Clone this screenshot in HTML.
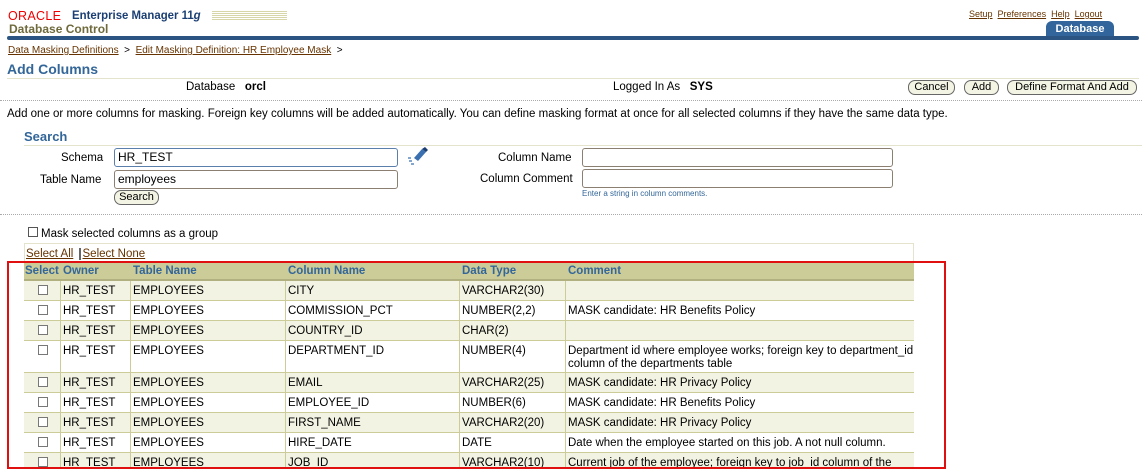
<!DOCTYPE html>
<html><head><meta charset="utf-8"><style>
*{margin:0;padding:0;box-sizing:border-box}
body{width:1142px;height:474px;overflow:hidden;background:#fff;font-family:"Liberation Sans",sans-serif;font-size:11.5px;color:#000;position:relative}
.a{position:absolute;white-space:nowrap}
.lk{color:#663300;text-decoration:underline}
.btn{position:absolute;height:15px;border:1px solid #666;border-radius:7px;background:#f4f4e4;font-size:11px;line-height:13px;text-align:center;color:#000}
.dot{position:absolute;left:0;width:1142px;border-top:1px dotted #aaa}
.inp{position:absolute;height:19px;border:1px solid #8a7f70;border-radius:3px;background:#fff;font-size:12px;line-height:17px;padding-left:3px}
.tb{position:absolute;left:24px;width:890px}
.r{position:absolute;left:0;width:890px;border-bottom:1px solid #cccc99}
.c{position:absolute;top:0;bottom:0;border-left:1px solid #cccc99;padding:4px 2px;font-size:11.5px;line-height:13px;white-space:nowrap}
.cb{position:absolute;left:14px;top:4px;width:10px;height:10px;border:1px solid #777;background:#fff}
</style></head><body>
<div class="a" style="left:8px;top:9px;font-size:12.5px;color:#e00;letter-spacing:0.3px">ORACLE</div>
<div class="a" style="left:72px;top:8px;color:#1b3f73;font-size:12px;font-weight:bold;transform:scaleX(0.95);transform-origin:left">Enterprise Manager 11<i>g</i></div>
<div class="a" style="left:212px;top:11px;width:75px;height:9px;background:repeating-linear-gradient(#d6d6a8 0 1px,#fff 1px 2px)"></div>
<div class="a" style="left:9px;top:22px;font-size:12px;font-weight:bold;color:#6e6a3c">Database Control</div>
<div class="a" style="left:969px;top:9px;font-size:9px"><span class="lk">Setup</span>&nbsp; <span class="lk">Preferences</span>&nbsp; <span class="lk">Help</span>&nbsp; <span class="lk">Logout</span></div>
<div class="a" style="left:1046px;top:21px;width:68px;height:16px;background:#31659c;border-radius:6px 6px 0 0;color:#fff;font-weight:bold;font-size:11px;text-align:center;line-height:16px">Database</div>
<div class="a" style="left:7px;top:36px;width:1132px;height:4px;background:#2c5483;border-radius:2px"></div>
<div class="a" style="left:8px;top:45px;font-size:10px"><span class="lk">Data Masking Definitions</span> &nbsp;&gt;&nbsp; <span class="lk">Edit Masking Definition: HR Employee Mask</span> &nbsp;&gt;</div>
<div class="a" style="left:7px;top:61px;font-size:14px;font-weight:bold;color:#336699">Add Columns</div>
<div class="a" style="left:7px;top:78px;width:1132px;border-top:1px solid #e4e4cc"></div>
<div class="a" style="left:186px;top:81px">Database &nbsp;&nbsp;<b>orcl</b></div>
<div class="a" style="left:613px;top:81px">Logged In As &nbsp;&nbsp;<b>SYS</b></div>
<div class="btn" style="left:908px;top:80px;width:47px">Cancel</div>
<div class="btn" style="left:964px;top:80px;width:35px">Add</div>
<div class="btn" style="left:1007px;top:80px;width:130px">Define Format And Add</div>
<div class="dot" style="top:100px"></div>
<div class="a" style="left:7px;top:108px">Add one or more columns for masking. Foreign key columns will be added automatically. You can define masking format at once for all selected columns if they have the same data type.</div>
<div class="a" style="left:24px;top:129px;font-size:13px;font-weight:bold;color:#336699">Search</div>
<div class="a" style="left:24px;top:145px;width:1118px;border-top:1px solid #e4e4cc"></div>
<div class="a" style="left:61px;top:152px">Schema</div>
<div class="inp" style="left:114px;top:148px;width:284px;border-color:#5a7faa">HR_TEST</div>
<svg class="a" style="left:405px;top:146px" width="24" height="20" viewBox="0 0 24 20"><path d="M9 12 L17 3 L21 6 L13 15 Z" fill="#3a6fb0"/><path d="M17 3 L20 1 L23 4 L21 6Z" fill="#1b3f73"/><path d="M3 12h3M4 15h3M6 18h3" stroke="#3a6fb0" stroke-width="1.2"/></svg>
<div class="a" style="left:40px;top:174px">Table Name</div>
<div class="inp" style="left:114px;top:170px;width:284px">employees</div>
<div class="btn" style="left:114px;top:190px;width:45px">Search</div>
<div class="a" style="left:498px;top:152px">Column Name</div>
<div class="inp" style="left:582px;top:148px;width:311px"></div>
<div class="a" style="left:480px;top:173px">Column Comment</div>
<div class="inp" style="left:582px;top:169px;width:311px"></div>
<div class="a" style="left:582px;top:189px;font-size:8px;color:#336699">Enter a string in column comments.</div>
<div class="dot" style="top:214px"></div>
<div class="a" style="left:28px;top:227px;width:10px;height:10px;border:1px solid #555"></div>
<div class="a" style="left:41px;top:228px">Mask selected columns as a group</div>
<div class="a" style="left:24px;top:243px;width:890px;height:20px;border:1px solid #e4e4cc;border-bottom:none"></div>
<div class="a" style="left:26px;top:248px"><span class="lk">Select All</span> <span style="border-left:2px solid #666;margin:0 2px"></span> <span class="lk">Select None</span></div>
<div class="tb" style="top:263px">
<div class="r" style="top:0;height:18px;background:#cccc99;border-bottom:2px solid #b0b080;color:#336699;font-weight:bold">
<div class="c" style="left:0;width:36px;border:none;padding:2px 0 0 1px">Select</div><div class="c" style="left:36px;padding-top:2px">Owner</div><div class="c" style="left:106px;padding-top:2px">Table Name</div><div class="c" style="left:261px;padding-top:2px">Column Name</div><div class="c" style="left:435px;padding-top:2px">Data Type</div><div class="c" style="left:541px;padding-top:2px">Comment</div></div>
</div>
<div class="tb" id="rows" style="top:281px"></div>
<script>
var d=[["CITY","VARCHAR2(30)","",20],["COMMISSION_PCT","NUMBER(2,2)","MASK candidate: HR Benefits Policy",20],["COUNTRY_ID","CHAR(2)","",20],["DEPARTMENT_ID","NUMBER(4)","Department id where employee works; foreign key to department_id<br>column of the departments table",32],["EMAIL","VARCHAR2(25)","MASK candidate: HR Privacy Policy",20],["EMPLOYEE_ID","NUMBER(6)","MASK candidate: HR Benefits Policy",20],["FIRST_NAME","VARCHAR2(20)","MASK candidate: HR Privacy Policy",20],["HIRE_DATE","DATE","Date when the employee started on this job. A not null column.",20],["JOB_ID","VARCHAR2(10)","Current job of the employee; foreign key to job_id column of the",20]];
var h="",y=0;d.forEach(function(r,i){h+='<div class="r" style="top:'+y+'px;height:'+r[3]+'px;background:'+(i%2?'#fff':'#f3f3e3')+'"><div class="cb"></div><div class="c" style="left:36px">HR_TEST</div><div class="c" style="left:106px">EMPLOYEES</div><div class="c" style="left:261px">'+r[0]+'</div><div class="c" style="left:435px">'+r[1]+'</div><div class="c" style="left:541px">'+r[2]+'</div></div>';y+=r[3];});
document.getElementById("rows").innerHTML=h;
</script>
<div class="a" style="left:7px;top:261px;width:939px;height:208px;border:2px solid #e01010"></div>
<div class="a" style="left:0;top:469px;width:1142px;height:5px;background:#fff"></div>
</body></html>
